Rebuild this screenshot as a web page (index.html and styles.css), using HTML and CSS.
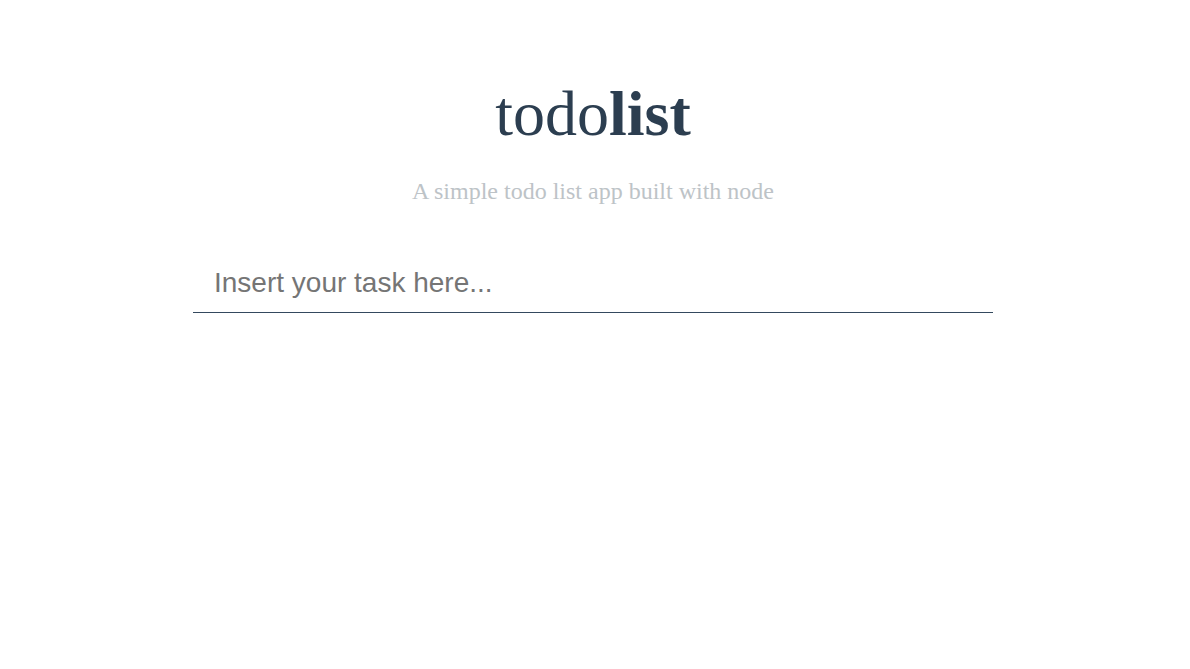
FILE: index.html
```html
<!DOCTYPE html>
<html lang="en">
<head>
<meta charset="utf-8">
<title>todolist</title>
<link rel="stylesheet" href="styles.css">
</head>
<body>
<main class="app">
  <header class="header">
    <h1 class="title">todo<strong>list</strong></h1>
    <p class="subtitle">A simple todo list app built with node</p>
  </header>
  <form class="task-form">
    <input class="task-input" type="text" placeholder="Insert your task here...">
  </form>
</main>
</body>
</html>
```
FILE: styles.css
```css
html, body {
  margin: 0;
  padding: 0;
  background: #ffffff;
}
body {
  font-family: "Liberation Serif", "Times New Roman", serif;
  color: #2c3e50;
}
.app {
  width: 800px;
  margin: 0 auto;
  padding-top: 76px;
  position: relative;
  left: -2px;
}
.header {
  text-align: center;
}
.title {
  margin: 0;
  font-size: 64px;
  font-weight: normal;
  line-height: 76px;
  color: #2c3e50;
}
.title strong {
  font-weight: bold;
}
.subtitle {
  margin: 25px 0 0;
  font-size: 24px;
  line-height: 28px;
  color: #bdc3c7;
}
.task-form {
  margin-top: 49px;
}
.task-input {
  display: block;
  box-sizing: border-box;
  width: 100%;
  height: 59px;
  padding: 0 21px;
  border: none;
  border-bottom: 1px solid #34495e;
  outline: none;
  font-family: "Liberation Sans", Arial, sans-serif;
  font-size: 28px;
  color: #2c3e50;
  background: transparent;
}
.task-input::placeholder {
  color: #757575;
}
```
